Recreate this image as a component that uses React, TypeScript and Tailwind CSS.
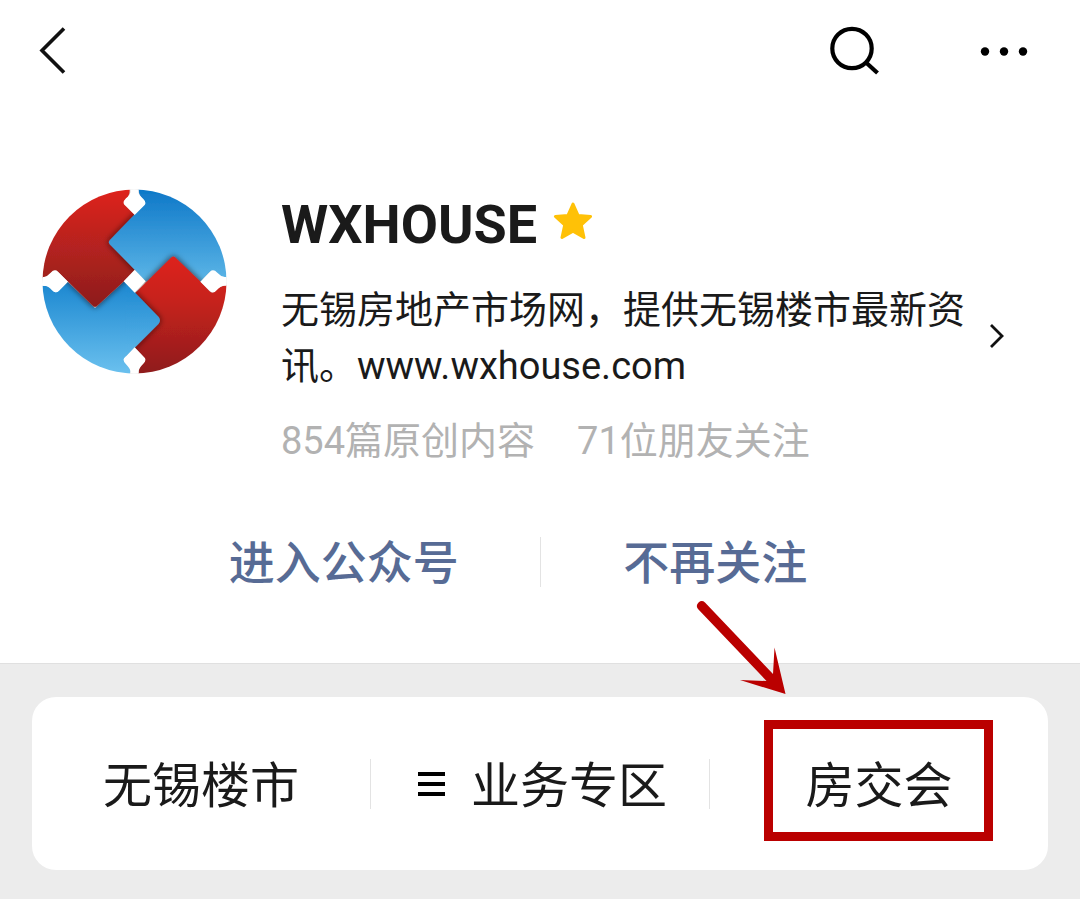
import type { ReactNode } from "react";

function BackIcon() {
  return (
    <svg width="28" height="48" viewBox="0 0 28 48" fill="none" stroke="#111" strokeWidth="3.6" aria-hidden="true">
      <path d="M26 2.500 L4 24.500 L26 46.500" />
    </svg>
  );
}

function SearchIcon() {
  return (
    <svg width="52" height="50" viewBox="0 0 52 50" fill="none" stroke="#000" strokeWidth="4.2" aria-hidden="true">
      <circle cx="24" cy="23.500" r="19.7" />
      <path d="M38 37.500 L49.500 48" />
    </svg>
  );
}

function MoreIcon() {
  return (
    <svg width="48" height="12" viewBox="0 0 48 12" fill="#000" aria-hidden="true">
      <circle cx="5" cy="7.500" r="4.2" />
      <circle cx="24" cy="7.500" r="4.2" />
      <circle cx="43" cy="7.500" r="4.2" />
    </svg>
  );
}

function StarIcon() {
  return (
    <svg width="40" height="40" viewBox="0 0 40 40" fill="#ffc107" stroke="#ffc107" strokeWidth="3" strokeLinejoin="round" aria-hidden="true">
      <path d="M20 3 L25 14.4 L37.600 15.4 L28.3 24 L31 36.500 L20 30.2 L9 36.500 L11.7 24 L2.4 15.4 L15 14.4 Z" />
    </svg>
  );
}

function ChevronIcon() {
  return (
    <svg width="16" height="26" viewBox="0 0 16 26" fill="none" stroke="#111" strokeWidth="2.8" aria-hidden="true">
      <path d="M2 2 L13 13 L2 24" />
    </svg>
  );
}

function MenuIcon() {
  return (
    <svg width="28" height="28" viewBox="0 0 28 28" fill="#000" aria-hidden="true">
      <path d="M1 2h27v4H1zM1 12h27v4H1zM1 22h27v4H1z" />
    </svg>
  );
}

function Logo() {
  const lowerBlue =
    "M30 318 L58 320 Q66 324 70 332 Q78 342 88 334 L115 306 L197 385 L284 305 L316 338 L388 412 Q396 422 388 432 L316 504 L286 534 Q280 542 288 548 Q302 558 303 574 L300 590 L30 590 Z";
  return (
    <svg className="size-[185px] shrink-0" viewBox="38 28 555 555" role="img" aria-label="WXHOUSE">
      <defs>
        <linearGradient id="redTop" x1="0" y1="30" x2="0" y2="385" gradientUnits="userSpaceOnUse">
          <stop offset="0" stopColor="#de241c" />
          <stop offset="0.5" stopColor="#b32320" />
          <stop offset="1" stopColor="#8c1c1a" />
        </linearGradient>
        <linearGradient id="redBottom" x1="0" y1="228" x2="0" y2="580" gradientUnits="userSpaceOnUse">
          <stop offset="0" stopColor="#de201c" />
          <stop offset="0.4" stopColor="#c5221f" />
          <stop offset="1" stopColor="#8f1c1a" />
        </linearGradient>
        <linearGradient id="blueTop" x1="0" y1="30" x2="0" y2="300" gradientUnits="userSpaceOnUse">
          <stop offset="0" stopColor="#0e78c8" />
          <stop offset="1" stopColor="#5ab4e6" />
        </linearGradient>
        <linearGradient id="blueBottom" x1="0" y1="306" x2="0" y2="580" gradientUnits="userSpaceOnUse">
          <stop offset="0" stopColor="#1b87d0" />
          <stop offset="1" stopColor="#6ac0ee" />
        </linearGradient>
        <filter id="shade" x="-20%" y="-20%" width="140%" height="140%">
          <feDropShadow dx="0" dy="0" stdDeviation="9" floodColor="#1c0a14" floodOpacity="0.75" />
        </filter>
        <clipPath id="disc">
          <circle cx="315.5" cy="305.5" r="276" />
        </clipPath>
        <clipPath id="lowerRight">
          <rect x="290" y="312" width="310" height="280" />
        </clipPath>
      </defs>
      <g clipPath="url(#disc)">
        <path fill="url(#blueBottom)" d={lowerBlue} />
        <path
          filter="url(#shade)"
          fill="url(#redTop)"
          d="M30 296 Q58 292 64 282 Q74 266 86 276 L115 305 L190 378 Q197 385 204 378 L284 305 L330 260 L330 90 L286 76 Q280 68 288 60 Q304 50 300 20 L30 20 Z"
        />
        <path
          filter="url(#shade)"
          fill="url(#blueTop)"
          d="M326 20 Q328 50 342 60 Q352 68 344 76 L314 106 L241 182 Q236 188 241 194 L316 270 L350 306 L514 306 L540 278 Q550 268 560 280 Q568 292 600 294 L600 20 Z"
        />
        <path
          filter="url(#shade)"
          fill="url(#redBottom)"
          d="M318 340 L425 234 Q432 227 439 234 L514 306 L540 334 Q550 344 560 332 Q570 318 600 316 L600 590 L326 590 L329 572 Q330 558 342 550 Q352 542 344 534 L316 504 L310 420 Z"
        />
        <g clipPath="url(#lowerRight)">
          <path filter="url(#shade)" fill="url(#blueBottom)" d={lowerBlue} />
        </g>
        <g fill="#fff">
          <path d="M303 20 V38 Q302 46 290 56 Q278 68 286 76 L316 106 L346 76 Q352 68 342 58 Q328 46 328 38 V20 Z" />
          <path d="M303 594 V574 Q302 566 290 554 Q278 542 286 534 L316 503 L346 534 Q352 542 342 552 Q328 566 328 574 V594 Z" />
          <path d="M30 292 H44 Q54 290 64 279 Q76 266 86 276 L116 306 L88 334 Q78 343 68 332 Q58 318 44 318 H30 Z" />
          <path d="M602 292 H586 Q574 290 564 279 Q552 266 542 276 L513 306 L542 335 Q552 344 562 332 Q572 318 586 318 H602 Z" />
          <path d="M316 270 L349 305 L316 339 L283 305 Z" />
        </g>
      </g>
    </svg>
  );
}

function MenuItem({ icon, label, children }: { icon?: ReactNode; label: string; children?: ReactNode }) {
  return (
    <button type="button" className="relative flex flex-1 items-center justify-center">
      {icon && <span className="pr-[26px] pl-1">{icon}</span>}
      <span className="pt-1.5">{label}</span>
      {children}
    </button>
  );
}

function Divider() {
  return <span className="h-[50px] w-px shrink-0 self-center bg-[#e3e3e3]" />;
}

export default function App() {
  return (
    <div className="flex min-h-screen flex-col bg-white font-[Roboto,'Noto_Sans_CJK_SC',sans-serif] text-[#1a1a1a]">
      <header className="flex h-[100px] items-center justify-between pr-[52px] pl-[38px]">
        <button type="button" aria-label="返回">
          <BackIcon />
        </button>
        <div className="flex items-center gap-[100px]">
          <button type="button" aria-label="搜索">
            <SearchIcon />
          </button>
          <button type="button" aria-label="更多">
            <MoreIcon />
          </button>
        </div>
      </header>

      <main className="flex flex-1 flex-col">
        <section className="flex gap-[54px] pt-[89px] pr-[75px] pl-[42px]">
          <Logo />
          <div className="min-w-0 flex-1">
            <div className="flex h-[70px] items-center gap-4">
              <h1 className="text-[54px] font-bold">WXHOUSE</h1>
              <span className="pb-1.5">
                <StarIcon />
              </span>
            </div>
            <a href="#profile" className="mt-[23px] flex items-center justify-between">
              <p className="w-[688px] text-[38px] leading-[56px]">无锡房地产市场网，提供无锡楼市最新资讯。www.wxhouse.com</p>
              <span className="pb-1">
                <ChevronIcon />
              </span>
            </a>
            <p className="mt-[19px] flex gap-[42px] text-[38px] leading-[56px] text-[#b2b2b2]">
              <span>854篇原创内容</span>
              <span>71位朋友关注</span>
            </p>
          </div>
        </section>

        <section className="mt-14 grid h-[70px] grid-cols-[1fr_1px_1fr] items-center text-[46px] font-medium text-[#576b95]">
          <button type="button" className="pt-1 pl-[148px]">
            进入公众号
          </button>
          <Divider />
          <button type="button" className="pt-1 pr-[190px]">
            不再关注
          </button>
        </section>

        <section className="relative mt-[68px] flex-1 border-t border-[#e0e0e0] bg-[#ececec] px-8 pt-[33px] pb-[29px]">
          <nav className="flex h-[173px] items-stretch rounded-3xl bg-white text-[49px]">
            <MenuItem label="无锡楼市" />
            <Divider />
            <MenuItem icon={<MenuIcon />} label="业务专区" />
            <Divider />
            <MenuItem label="房交会">
              <span className="absolute top-[23px] right-[55px] bottom-[29px] left-[54px] border-[9px] border-[#ba0000]" />
            </MenuItem>
          </nav>
          <svg
            className="absolute -top-[64px] right-[294px]"
            width="90"
            height="94"
            viewBox="696 600 90 94"
            fill="#ba0000"
            aria-hidden="true"
          >
            <path d="M705 602.5 L773 674 L774.5 647.5 L785.5 694 L740 680 L766.500 681 L698 609 A4.800 4.800 0 0 1 705 602.5 Z" />
          </svg>
        </section>
      </main>
    </div>
  );
}
